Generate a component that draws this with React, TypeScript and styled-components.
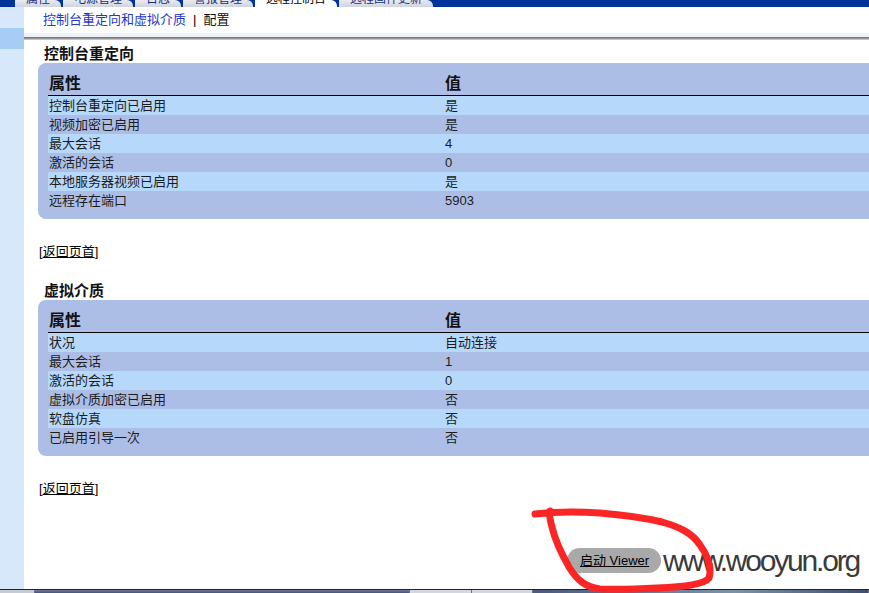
import React from "react";
import styled, { createGlobalStyle } from "styled-components";

const GlobalStyle = createGlobalStyle`
  *, *::before, *::after { box-sizing: border-box; }
  html, body { margin: 0; padding: 0; }
  body {
    width: 869px;
    height: 593px;
    overflow: hidden;
    background: #ffffff;
    font-family: "Liberation Sans", "Noto Sans CJK SC", sans-serif;
    color: #1a1a1a;
  }
`;

const Page = styled.div`
  position: relative;
  width: 869px;
  height: 593px;
  display: flex;
  flex-direction: column;
  overflow: hidden;
`;

const TabStrip = styled.div`
  height: 7px;
  flex: none;
  display: flex;
  gap: 2px;
  padding-left: 15px;
  background: #003399;
  overflow: hidden;
`;

const Tab = styled.div<{ $active?: boolean }>`
  height: 7px;
  padding: 0 11px;
  display: flex;
  align-items: flex-end;
  overflow: hidden;
  border-radius: 0 6px 0 0;
  font-size: 12px;
  line-height: 15px;
  white-space: nowrap;
  color: ${(p) => (p.$active ? "#000000" : "#1b2f7a")};
  background: ${(p) =>
    p.$active ? "#ffffff" : "linear-gradient(#e8ebf1, #cfd4de)"};
`;

const Main = styled.div`
  flex: 1;
  display: flex;
  min-height: 0;
`;

const Sidebar = styled.div`
  width: 24px;
  flex: none;
  background: #d6e8fa;
  padding-top: 21px;
`;

const SideItem = styled.div<{ $selected?: boolean }>`
  height: 21px;
  background: ${(p) => (p.$selected ? "#a6cdf6" : "transparent")};
`;

const Content = styled.div`
  flex: 1;
  min-width: 0;
  background: #ffffff;
  overflow: hidden;
  display: flex;
  flex-direction: column;
`;

const Breadcrumb = styled.div`
  height: 26px;
  padding-left: 19px;
  display: flex;
  align-items: center;
  font-size: 13px;
  line-height: 18px;
  color: #111111;
`;

const CrumbLink = styled.a`
  color: #2638c8;
  text-decoration: none;
`;

const CrumbDivider = styled.span`
  margin: 0 7px 0 7px;
  color: #000;
`;

const Rule = styled.div`
  height: 7px;
  flex: none;
  background: linear-gradient(
    #eef2fa 0 4px,
    #777777 4px 5px,
    #979797 5px 6px,
    #c4c4c4 6px 7px
  );
`;

const Section = styled.section<{ $gap?: number }>`
  padding-left: 14px;
  margin-top: ${(p) => p.$gap ?? 0}px;
`;

const SectionTitle = styled.h2`
  margin: 0 0 0 6px;
  height: 23px;
  padding-top: 4px;
  font-size: 15px;
  line-height: 19px;
  font-weight: bold;
  color: #111111;
`;

const Panel = styled.div`
  margin-right: -20px;
  background: #adbee6;
  border-radius: 8px;
  padding: 0 0 9px 10px;
`;

const HeaderRow = styled.div`
  height: 33px;
  display: grid;
  grid-template-columns: 396px 1fr;
  align-items: end;
  padding: 0 0 1px 1px;
  border-bottom: 1px solid #000000;
  font-size: 16px;
  line-height: 20px;
  font-weight: bold;
  color: #111111;
`;

const Row = styled.div<{ $alt?: boolean }>`
  height: 19px;
  display: grid;
  grid-template-columns: 396px 1fr;
  padding-left: 1px;
  font-size: 13px;
  line-height: 19px;
  color: #1c1c1c;
  background: ${(p) => (p.$alt ? "#b5d8fb" : "transparent")};
`;

const BackLine = styled.div`
  margin: 23px 0 0 1px;
  font-size: 13px;
  line-height: 19px;
  color: #000;
`;

const BackLink = styled.a`
  color: #000;
  text-decoration: underline;
`;

const ButtonRow = styled.div`
  margin-top: 50px;
  padding-left: 543px;
  display: flex;
`;

const LaunchButton = styled.a`
  width: 94px;
  height: 25px;
  border-radius: 13px;
  background: #a9a9a9;
  display: flex;
  align-items: center;
  padding-left: 13px;
  font-size: 13px;
  line-height: 16px;
  color: #000;
  text-decoration: underline;
  white-space: nowrap;
`;

const Taskbar = styled.div`
  height: 4px;
  flex: none;
  display: flex;
  border-top: 1px solid #1e2434;
`;

const TaskSegment = styled.div<{ $w?: number; $bg: string }>`
  width: ${(p) => (p.$w ? `${p.$w}px` : "auto")};
  flex: ${(p) => (p.$w ? "none" : "1")};
  background: ${(p) => p.$bg};
  border-right: 1px solid #6b7488;
`;

const Watermark = styled.div`
  position: absolute;
  left: 663px;
  top: 543px;
  font-family: "Liberation Sans", Arial, sans-serif;
  font-size: 30px;
  line-height: 36px;
  letter-spacing: -2.2px;
  color: #3b3b3b;
  white-space: nowrap;
`;

const Scribble = styled.svg`
  position: absolute;
  left: 0;
  top: 0;
  pointer-events: none;
`;

const tabs = ["属性", "电源管理", "日志", "警报管理", "远程控制台", "远程固件更新"];

type Item = [string, string];

const consoleRows: Item[] = [
  ["控制台重定向已启用", "是"],
  ["视频加密已启用", "是"],
  ["最大会话", "4"],
  ["激活的会话", "0"],
  ["本地服务器视频已启用", "是"],
  ["远程存在端口", "5903"],
];

const mediaRows: Item[] = [
  ["状况", "自动连接"],
  ["最大会话", "1"],
  ["激活的会话", "0"],
  ["虚拟介质加密已启用", "否"],
  ["软盘仿真", "否"],
  ["已启用引导一次", "否"],
];

function PropertyPanel({ rows }: { rows: Item[] }) {
  return (
    <Panel>
      <HeaderRow>
        <span>属性</span>
        <span>值</span>
      </HeaderRow>
      {rows.map(([k, v], i) => (
        <Row key={k} $alt={i % 2 === 0}>
          <span>{k}</span>
          <span>{v}</span>
        </Row>
      ))}
    </Panel>
  );
}

export default function App() {
  return (
    <Page>
      <GlobalStyle />
      <TabStrip>
        {tabs.map((t, i) => (
          <Tab key={t} $active={i === 4}>
            {t}
          </Tab>
        ))}
      </TabStrip>
      <Main>
        <Sidebar>
          <SideItem $selected />
        </Sidebar>
        <Content>
          <Breadcrumb>
            <CrumbLink>控制台重定向和虚拟介质</CrumbLink>
            <CrumbDivider>|</CrumbDivider>
            <span>配置</span>
          </Breadcrumb>
          <Rule />
          <Section>
            <SectionTitle>控制台重定向</SectionTitle>
            <PropertyPanel rows={consoleRows} />
            <BackLine>
              [<BackLink>返回页首</BackLink>]
            </BackLine>
          </Section>
          <Section $gap={16}>
            <SectionTitle>虚拟介质</SectionTitle>
            <PropertyPanel rows={mediaRows} />
            <BackLine>
              [<BackLink>返回页首</BackLink>]
            </BackLine>
          </Section>
          <ButtonRow>
            <LaunchButton>启动 Viewer</LaunchButton>
          </ButtonRow>
        </Content>
      </Main>
      <Taskbar>
        <TaskSegment $w={35} $bg="#c6cbd6" />
        <TaskSegment $w={375} $bg="linear-gradient(#6f7c9c, #46537a)" />
        <TaskSegment $w={62} $bg="#d3d7df" />
        <TaskSegment $w={61} $bg="#d3d7df" />
        <TaskSegment $bg="linear-gradient(90deg, #4a5a80, #7b93a8 60%, #3e4d72)" />
      </Taskbar>
      <Watermark>www.wooyun.org</Watermark>
      <Scribble width="869" height="593" viewBox="0 0 869 593">
        <path
          d="M535 514 C560 511 585 512 600 513 C625 515 645 518 662 522 C680 527 692 533 700 545 C708 556 712 568 709 578 C704 585 680 587 657 588 C640 589 620 590 600 589 C585 587 577 580 569 567 C561 553 555 540 552 527 C550 520 549 515 550 511"
          fill="none"
          stroke="#fb2525"
          strokeWidth="7"
          strokeLinecap="round"
          strokeLinejoin="round"
        />
      </Scribble>
    </Page>
  );
}
